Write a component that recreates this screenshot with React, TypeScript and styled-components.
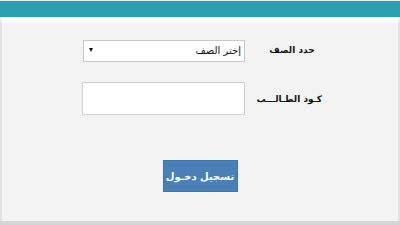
import styled, { createGlobalStyle } from "styled-components";

const Global = createGlobalStyle`
  html, body {
    margin: 0;
    padding: 0;
    background: #f3f3f3;
  }
  body {
    font-family: "DejaVu Sans", "Noto Sans", sans-serif;
  }
`;

const Page = styled.div`
  width: 400px;
  height: 225px;
  display: flex;
  flex-direction: column;
  overflow: hidden;
  background: #f3f3f3;
`;

const TopBar = styled.div`
  height: 16px;
  border-top: 1px solid #dff1f3;
  background: #2b9fb1;
  flex-shrink: 0;
`;

const Panel = styled.div`
  flex: 1;
  display: flex;
  flex-direction: column;
  border-top: 6px solid #ffffff;
  border-left: 2px solid #e2e2e2;
  border-right: 2px solid #e2e2e2;
  background: #f3f3f3;
`;

const Form = styled.form`
  flex: 1;
  display: flex;
  flex-direction: column;
  direction: rtl;
  padding-top: 16px;
`;

const Row = styled.div<{ $gapBelow: number }>`
  display: flex;
  align-items: center;
  padding-right: 76px;
  margin-bottom: ${(p) => p.$gapBelow}px;
`;

const Label = styled.label`
  width: 60px;
  margin-left: 17px;
  text-align: center;
  font-size: 9px;
  font-weight: bold;
  color: #111;
  white-space: nowrap;
`;

const SelectWrap = styled.div`
  position: relative;
  width: 162px;
  height: 22px;
`;

const Select = styled.select`
  appearance: none;
  width: 100%;
  height: 100%;
  box-sizing: border-box;
  border: 1px solid #c9c9c9;
  background: #fff;
  direction: rtl;
  padding: 0 3px;
  font-family: "DejaVu Sans", sans-serif;
  font-size: 10px;
  color: #111;
  outline: none;
`;

const Arrow = styled.span`
  position: absolute;
  left: 6px;
  top: 9px;
  width: 0;
  height: 0;
  border-left: 2px solid transparent;
  border-right: 2px solid transparent;
  border-top: 4px solid #111;
  pointer-events: none;
`;

const Input = styled.input`
  width: 163px;
  height: 33px;
  box-sizing: border-box;
  border: 1px solid #cfcfcf;
  background: #fff;
  outline: none;
`;

const ButtonRow = styled.div`
  display: flex;
  justify-content: center;
`;

const Submit = styled.button`
  width: 75px;
  height: 32px;
  padding: 0;
  border: 1px solid #3f73a8;
  background: #4a80b8;
  color: #fff;
  font-family: "DejaVu Sans", sans-serif;
  font-size: 10px;
  font-weight: bold;
  white-space: nowrap;
  cursor: pointer;
`;

const Footer = styled.div`
  height: 4px;
  background: #d6d6d6;
  flex-shrink: 0;
`;

export default function App() {
  return (
    <>
      <Global />
      <Page>
        <TopBar />
        <Panel>
          <Form onSubmit={(e) => e.preventDefault()}>
            <Row $gapBelow={21}>
              <Label>حدد الصف</Label>
              <SelectWrap>
                <Select defaultValue="">
                  <option value="">إختر الصف</option>
                </Select>
                <Arrow />
              </SelectWrap>
            </Row>
            <Row $gapBelow={45}>
              <Label>كـود الطـالـــب</Label>
              <Input type="text" />
            </Row>
            <ButtonRow>
              <Submit type="submit">تسجيل دخـول</Submit>
            </ButtonRow>
          </Form>
        </Panel>
        <Footer />
      </Page>
    </>
  );
}
